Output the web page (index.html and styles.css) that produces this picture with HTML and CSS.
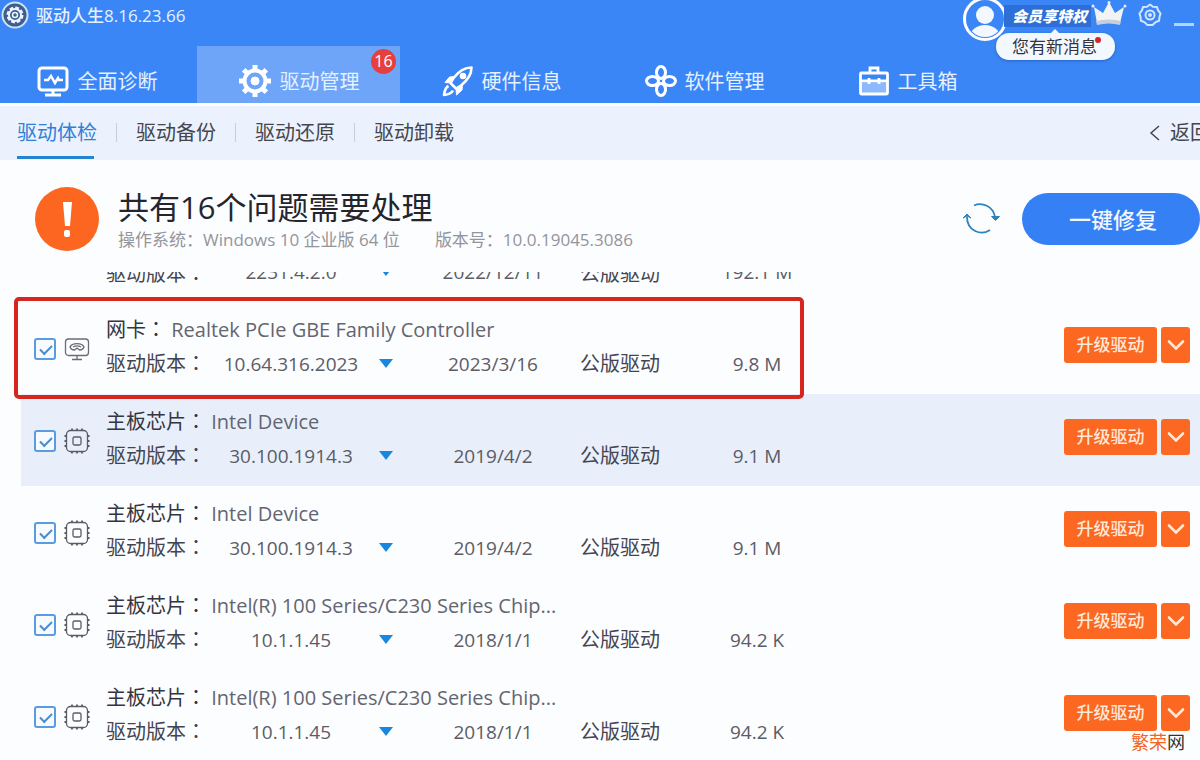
FILE: index.html
```html
<!DOCTYPE html>
<html lang="zh-CN">
<head>
<meta charset="utf-8">
<title>驱动人生</title>
<link rel="stylesheet" href="styles.css">
</head>
<body>
<svg class="defs" aria-hidden="true">
  <symbol id="chip" viewBox="0 0 26 26">
    <g fill="none" stroke="#5b5b66" stroke-width="1.3">
      <rect x="2.500" y="2.500" width="21" height="21" rx="4"/>
      <rect x="9" y="9" width="8" height="8" rx="1.5"/>
      <path stroke-width="1.8" d="M8 .5v2.500M13 .5v2.500M18 .5v2.500M8 23v2.500M13 23v2.500M18 23v2.500M.5 8h2.500M.5 13h2.500M.5 18h2.500M23 8h2.500M23 13h2.500M23 18h2.500"/>
    </g>
  </symbol>
  <symbol id="net" viewBox="0 0 26 26">
    <g fill="none" stroke="#6b6b76" stroke-width="1.3">
      <rect x="1.500" y="3" width="23" height="16.500" rx="3"/>
      <path d="M13 19.500v4M8 23.500h10"/>
      <path d="M6 11c2-4.500 12-4.500 14 0q-1 3-4.500 3l-2.500-2-2.500 2q-3.500 0-4.500-3zM9 11c2.500-1.500 5.500-1.500 8 0"/>
    </g>
  </symbol>
  <symbol id="down" viewBox="0 0 18 12">
    <path fill="none" stroke="#ffe9d8" stroke-width="2.600" stroke-linecap="round" d="M2 2.500l7 7 7-7"/>
  </symbol>
</svg>

<header class="header">
  <div class="titlebar">
    <svg class="logo" viewBox="0 0 28 28" aria-hidden="true">
      <circle cx="14" cy="14" r="12.500" fill="#3c5f92" stroke="#d3e0f2" stroke-width="2"/>
      <circle cx="14" cy="14" r="7" fill="#3c5f92" stroke="#eef5ff" stroke-width="3" stroke-dasharray="3.600 1.900"/>
      <circle cx="14" cy="14" r="6" fill="none" stroke="#eef5ff" stroke-width="2"/>
      <circle cx="14" cy="14" r="2.500" fill="none" stroke="#eef5ff" stroke-width="1.500"/>
    </svg>
    <h1 class="app-name">驱动人生8.16.23.66</h1>
    <div class="account">
      <button class="avatar" aria-label="账户">
        <svg viewBox="0 0 46 46">
          <defs><clipPath id="face"><circle cx="23" cy="23" r="18"/></clipPath></defs>
          <circle cx="23" cy="23" r="20.500" fill="#3b86f7" stroke="#fff" stroke-width="3"/>
          <g clip-path="url(#face)" fill="#f3f8ff"><circle cx="23" cy="19" r="9"/><ellipse cx="23" cy="41" rx="15" ry="12"/></g>
        </svg>
      </button>
      <a class="vip" href="#vip">会员享特权</a>
      <svg class="crown" viewBox="0 0 36 26" aria-hidden="true">
        <path fill="#f2f3f5" d="M6 23L3 7l9 6 6-11 6 11 9-6-4 16q-11-3-23 0z"/>
        <path fill="#c9ced8" d="M6 25l-1-4q13-3 25 0l-1 4q-11-3-23 0z"/>
        <g fill="#e8eefb"><circle cx="18" cy="2.500" r="1.500"/><circle cx="2" cy="6" r="1.500"/><circle cx="34" cy="6" r="1.500"/></g>
      </svg>
      <div class="bubble">您有新消息</div>
    </div>
    <button class="plain settings" aria-label="设置">
      <svg viewBox="0 0 24 24" fill="none" stroke="#d3e6ff" stroke-width="2">
        <path stroke-linejoin="round" d="M12 1.500l3 2.200 3.900.2 1.200 3.500 2.400 3-1 3.600-.4 3.700-3.500 1.400L14.600 22h-5.200l-3-2.900-3.500-1.400-.4-3.700-1-3.600 2.400-3 1.200-3.500 3.900-.2z"/>
        <circle cx="12" cy="12" r="4.500"/><circle cx="12" cy="12" r="1"/>
      </svg>
    </button>
    <button class="plain minimize" aria-label="最小化"></button>
  </div>

  <nav class="tabs">
    <a class="tab first" href="#diag">
      <svg class="i34" viewBox="0 0 34 34" fill="none" stroke="#fff" stroke-width="3">
        <rect x="3" y="4" width="28" height="22" rx="3"/><path d="M17 26v4M9 31h16"/>
        <path stroke-width="2.500" d="M8 16h4l3-4 4 7 3-5 1 2h4"/>
      </svg>全面诊断</a>
    <a class="tab active" href="#manage">
      <svg class="i34" viewBox="0 0 34 34" fill="none" stroke="#fff">
        <circle cx="17" cy="17" r="10.500" stroke-width="4"/>
        <g stroke-width="5"><path d="M17 1v5M17 28v5M1 17h5M28 17h5M5.700 5.700l3.500 3.500M24.800 24.800l3.500 3.500M28.300 5.700l-3.500 3.500M9.200 24.800l-3.500 3.500"/></g>
        <circle cx="17" cy="17" r="4" fill="#fff"/>
      </svg>驱动管理<span class="badge">16</span></a>
    <a class="tab" href="#hardware">
      <svg class="i32" viewBox="0 0 32 32" fill="none" stroke="#fff" stroke-width="2.600" stroke-linejoin="round">
        <path d="M29.500 2.500c-8 0-13 4-18 10.500l-3 5 5.500 5.500 5-3C26 15 29.500 10 29.500 2.500z"/>
        <path fill="#fff" stroke-width="1" d="M13 11.500L7.500 12 3 17.500l6 .5zM20.500 19l-.5 6-5.500 5-.5-6.500z"/>
        <circle cx="21" cy="11" r="2" fill="#fff"/>
        <path d="M6.500 21c-3 1.500-4 4.500-4.500 9 4-.5 7.500-1.500 9-4.500"/>
      </svg>硬件信息</a>
    <a class="tab" href="#software">
      <svg class="i32" viewBox="0 0 32 32" fill="none" stroke="#fff" stroke-width="3">
        <ellipse cx="16" cy="7.500" rx="4.500" ry="6"/><ellipse cx="16" cy="24.500" rx="4.500" ry="6"/>
        <ellipse cx="7.500" cy="16" rx="6" ry="4.500"/><ellipse cx="24.500" cy="16" rx="6" ry="4.500"/>
      </svg>软件管理</a>
    <a class="tab" href="#toolbox">
      <svg class="i32" viewBox="0 0 32 32" fill="none" stroke="#fff" stroke-width="2.800">
        <path fill="#8db8fb" stroke="none" d="M3 18h26v10H3z"/>
        <rect x="2.500" y="8" width="27" height="21" rx="1"/><path d="M12 8V3h8v5M2 16h28M11 13v6M21 13v6"/>
      </svg>工具箱</a>
  </nav>
</header>

<nav class="subnav">
  <a class="sub current" href="#check">驱动体检</a>
  <a class="sub" href="#backup">驱动备份</a>
  <a class="sub" href="#restore">驱动还原</a>
  <a class="sub" href="#uninstall">驱动卸载</a>
  <a class="back" href="#back"><svg viewBox="0 0 12 16" aria-hidden="true"><path fill="none" stroke="#44444e" stroke-width="1.500" d="M10 1L2 8l8 7"/></svg>返回</a>
</nav>

<main>
  <section class="summary">
    <svg class="alert" viewBox="0 0 64 64" aria-hidden="true">
      <circle cx="32" cy="32" r="32" fill="#fc6621"/><path fill="#fff" d="M28 15h9l-2 24h-5z"/><rect x="29" y="43" width="6" height="7" rx="2" fill="#fff"/>
    </svg>
    <div class="summary-text">
      <h2>共有16个问题需要处理</h2>
      <p><span>操作系统：Windows 10 企业版 64 位</span><span>版本号：10.0.19045.3086</span></p>
    </div>
    <button class="plain refresh" aria-label="刷新">
      <svg viewBox="0 0 38 34" fill="none" stroke="#2c83bd" stroke-width="1.800">
        <path d="M12 3.500C20 0 31 4 33 15M28 28C19 34 5 29 5 15"/>
        <path fill="#2c83bd" stroke-width="1" d="M29.500 14.500h8l-4 4zM1 16l4-4 4 4-4-2z"/>
      </svg>
    </button>
    <button class="fix">一键修复</button>
  </section>

  <ul class="list">
    <li class="row partial">
      <div class="detail"><span>驱动版本<i lang="zh-TW">：</i></span><span class="version">2231.4.2.0</span><button class="plain pick" aria-label="选择版本"></button><span class="date">2022/12/11</span><span class="type">公版驱动</span><span class="size">192.1 M</span></div>
    </li>
    <li class="row">
      <input class="check" type="checkbox" id="d1" checked>
      <svg class="device"><use href="#net"/></svg>
      <div class="info">
        <label class="name" for="d1">网卡<i lang="zh-TW">：</i> <span>Realtek PCIe GBE Family Controller</span></label>
        <div class="detail"><span>驱动版本<i lang="zh-TW">：</i></span><span class="version">10.64.316.2023</span><button class="plain pick" aria-label="选择版本"></button><span class="date">2023/3/16</span><span class="type">公版驱动</span><span class="size">9.8 M</span></div>
      </div>
      <div class="actions"><button class="upgrade">升级驱动</button><button class="more" aria-label="更多"><svg><use href="#down"/></svg></button></div>
      <div class="marker"></div>
    </li>
    <li class="row selected">
      <input class="check" type="checkbox" id="d2" checked>
      <svg class="device"><use href="#chip"/></svg>
      <div class="info">
        <label class="name" for="d2">主板芯片<i lang="zh-TW">：</i> <span>Intel Device</span></label>
        <div class="detail"><span>驱动版本<i lang="zh-TW">：</i></span><span class="version">30.100.1914.3</span><button class="plain pick" aria-label="选择版本"></button><span class="date">2019/4/2</span><span class="type">公版驱动</span><span class="size">9.1 M</span></div>
      </div>
      <div class="actions"><button class="upgrade">升级驱动</button><button class="more" aria-label="更多"><svg><use href="#down"/></svg></button></div>
    </li>
    <li class="row">
      <input class="check" type="checkbox" id="d3" checked>
      <svg class="device"><use href="#chip"/></svg>
      <div class="info">
        <label class="name" for="d3">主板芯片<i lang="zh-TW">：</i> <span>Intel Device</span></label>
        <div class="detail"><span>驱动版本<i lang="zh-TW">：</i></span><span class="version">30.100.1914.3</span><button class="plain pick" aria-label="选择版本"></button><span class="date">2019/4/2</span><span class="type">公版驱动</span><span class="size">9.1 M</span></div>
      </div>
      <div class="actions"><button class="upgrade">升级驱动</button><button class="more" aria-label="更多"><svg><use href="#down"/></svg></button></div>
    </li>
    <li class="row">
      <input class="check" type="checkbox" id="d4" checked>
      <svg class="device"><use href="#chip"/></svg>
      <div class="info">
        <label class="name" for="d4">主板芯片<i lang="zh-TW">：</i> <span>Intel(R) 100 Series/C230 Series Chip...</span></label>
        <div class="detail"><span>驱动版本<i lang="zh-TW">：</i></span><span class="version">10.1.1.45</span><button class="plain pick" aria-label="选择版本"></button><span class="date">2018/1/1</span><span class="type">公版驱动</span><span class="size">94.2 K</span></div>
      </div>
      <div class="actions"><button class="upgrade">升级驱动</button><button class="more" aria-label="更多"><svg><use href="#down"/></svg></button></div>
    </li>
    <li class="row">
      <input class="check" type="checkbox" id="d5" checked>
      <svg class="device"><use href="#chip"/></svg>
      <div class="info">
        <label class="name" for="d5">主板芯片<i lang="zh-TW">：</i> <span>Intel(R) 100 Series/C230 Series Chip...</span></label>
        <div class="detail"><span>驱动版本<i lang="zh-TW">：</i></span><span class="version">10.1.1.45</span><button class="plain pick" aria-label="选择版本"></button><span class="date">2018/1/1</span><span class="type">公版驱动</span><span class="size">94.2 K</span></div>
      </div>
      <div class="actions"><button class="upgrade">升级驱动</button><button class="more" aria-label="更多"><svg><use href="#down"/></svg></button></div>
    </li>
  </ul>
</main>
<div class="watermark"><span>繁荣</span>网</div>
</body>
</html>
```

FILE: styles.css
```css
* { box-sizing: border-box; }

body {
  margin: 0;
  min-height: 100vh;
  position: relative;
  overflow: hidden;
  background: #fcfdff;
  color: #45454f;
  font-family: "Open Sans", "Noto Sans CJK SC", sans-serif;
  font-size: 20px;
}

a { color: inherit; text-decoration: none; }
button { font: inherit; border: 0; padding: 0; cursor: pointer; }
h1, h2, p, ul { margin: 0; padding: 0; }
svg { flex: none; }

/* Colon centred in its cell */
i { font-family: "Noto Sans CJK TC", sans-serif; font-style: normal; line-height: 1; }

.defs { position: absolute; width: 0; height: 0; }
.plain { background: none; }
.plain svg { display: block; width: 100%; }

/* Header */
.header { background: #3b86f7; color: #e6f1ff; }

.titlebar {
  display: flex;
  align-items: flex-start;
  height: 46px;
  padding: 0 6px 0 1px;
}
.logo { width: 28px; height: 28px; margin-top: 1px; }
.app-name {
  margin-left: 7px;
  font-size: 17px;
  font-weight: 500;
  line-height: 32px;
}

.account {
  position: relative;
  display: flex;
  align-items: flex-start;
  margin-left: auto;
}
.avatar { width: 46px; height: 46px; margin-top: -4px; background: none; }
.avatar svg { display: block; }
.vip {
  margin: 5px 0 0 -4px;
  padding: 0 4px 0 8px;
  background: #2d6fd6;
  color: #fff;
  font-size: 15px;
  font-weight: 900;
  font-style: italic;
  line-height: 22px;
}
.crown { width: 36px; height: 26px; }
.bubble {
  position: absolute;
  top: 33px;
  left: 34px;
  padding: 0 18px 0 16px;
  border-radius: 13px;
  background: #f3f8ff;
  box-shadow: 0 1px 3px #2763bf;
  color: #33333b;
  font-size: 17px;
  line-height: 27px;
  white-space: nowrap;
}
.bubble::before {
  content: "";
  position: absolute;
  top: -4px;
  left: 54px;
  border: 5px solid transparent;
  border-top: 0;
  border-bottom-color: #f3f8ff;
}
.bubble::after {
  content: "";
  position: absolute;
  top: 4px;
  right: 14px;
  width: 6px;
  height: 6px;
  border-radius: 50%;
  background: #d8222f;
}
.settings { width: 24px; margin: 3px 0 0 11px; }
.minimize {
  width: 20px;
  height: 3px;
  margin: 23px 0 0 12px;
  background: #b5d3ff;
}

.tabs { display: flex; height: 57px; }
.tab {
  position: relative;
  display: flex;
  flex: 0 1 203px;
  align-items: center;
  justify-content: center;
  gap: 8px;
  padding: 12px 0 0;
}
.tab.first { flex-basis: 197px; padding-right: 4px; }
.tab.active { background: #6ea5f9; }
.i34 { width: 34px; height: 34px; }
.i32 { width: 32px; height: 32px; }
.badge {
  position: absolute;
  top: 3px;
  right: 4px;
  width: 25px;
  border-radius: 50%;
  background: #e5403f;
  color: #fff;
  font-size: 16px;
  line-height: 25px;
  text-align: center;
}

/* Secondary navigation */
.subnav {
  display: flex;
  height: 57px;
  border-top: 3px solid #fbfdff;
  padding-left: 17px;
  background: #ebf2fd;
  line-height: 53px;
  white-space: nowrap;
}
.sub { position: relative; margin-right: 39px; }
.sub:not(:nth-child(4))::after {
  content: "";
  position: absolute;
  top: 17px;
  right: -20px;
  width: 1px;
  height: 19px;
  background: #c8ced9;
}
.current { color: #2f80d8; }
.current::before {
  content: "";
  position: absolute;
  right: 3px;
  bottom: 1px;
  left: 0;
  height: 3px;
  background: #2583cf;
}
.back {
  display: flex;
  align-items: center;
  gap: 9px;
  height: 53px;
  margin: 0 -10px 0 auto;
}
.back svg { width: 12px; height: 16px; }

/* Summary */
.summary {
  display: flex;
  align-items: center;
  height: 112px;
  padding: 6px 0 0 35px;
}
.alert { width: 64px; height: 64px; }
.summary-text { margin: 6px 0 0 19px; }
h2 {
  color: #25252e;
  font-size: 31px;
  font-weight: 400;
  line-height: 36px;
}
.summary p {
  display: flex;
  gap: 35px;
  color: #94949b;
  font-size: 17px;
  line-height: 30px;
}
.refresh { width: 38px; margin-left: auto; }
.fix {
  width: 178px;
  height: 52px;
  margin-left: 22px;
  padding: 0 0 2px 4px;
  border-radius: 26px;
  background: #3580f4;
  color: #f1f7ff;
  font-size: 22px;
  font-weight: 500;
}

/* Driver list */
.list {
  overflow: hidden;
  padding-left: 21px;
  list-style: none;
}
.row {
  position: relative;
  display: flex;
  align-items: center;
  height: 92px;
  padding: 10px 10px 14px 13px;
}
.partial {
  align-items: flex-start;
  height: 47px;
  margin-top: -17px;
  padding: 0 0 0 85px;
  white-space: nowrap;
}
.selected { background: #e8effb; }

.check {
  appearance: none;
  width: 22px;
  height: 22px;
  margin: 5px 0 0;
  border: 2px solid #5b9be0;
  border-radius: 3px;
  background: #f7fbff;
}
.check:checked::before {
  content: "";
  display: block;
  width: 10px;
  height: 5px;
  margin: 5px 0 0 4px;
  border: solid #4b8ccf;
  border-width: 0 0 2px 2px;
  transform: rotate(-45deg);
}
.device { width: 26px; height: 26px; margin: 6px 0 0 8px; }
.info { margin: 2px 0 0 16px; line-height: 34px; white-space: nowrap; }
.name { display: block; height: 34px; color: #35353f; }
.name span { color: #65656f; }
.detail { display: flex; align-items: center; height: 34px; }
.detail > :first-child { width: 100px; }
.version, .date, .size { color: #5c5c66; }
.version { width: 170px; font-size: 19px; text-align: center; }
.pick {
  width: 20px;
  height: 20px;
  background: #1787e0;
  clip-path: polygon(3px 5px, 17px 5px, 10px 14px);
}
.date { width: 154px; margin-left: 20px; font-size: 19px; text-align: center; }
.type { margin-left: 10px; }
.size { width: 90px; margin-left: 52px; font-size: 19px; text-align: center; }

.actions { display: flex; gap: 4px; margin: 0 0 2px auto; }
.upgrade, .more {
  height: 36px;
  border-radius: 3px;
  background: #fc6722;
  color: #ffe9d8;
}
.upgrade { width: 93px; padding-bottom: 3px; font-size: 17px; font-weight: 500; }
.more { width: 29px; }
.more svg { display: block; width: 18px; height: 12px; margin: auto; }

.marker {
  position: absolute;
  z-index: 1;
  top: -5px;
  left: -7px;
  width: 790px;
  height: 102px;
  border: 4px solid #d7261f;
  border-radius: 5px;
  pointer-events: none;
}

.watermark {
  position: absolute;
  right: 15px;
  bottom: 7px;
  color: #333;
  font-size: 18px;
  line-height: 26px;
}
.watermark span { color: #f4641e; }
```
